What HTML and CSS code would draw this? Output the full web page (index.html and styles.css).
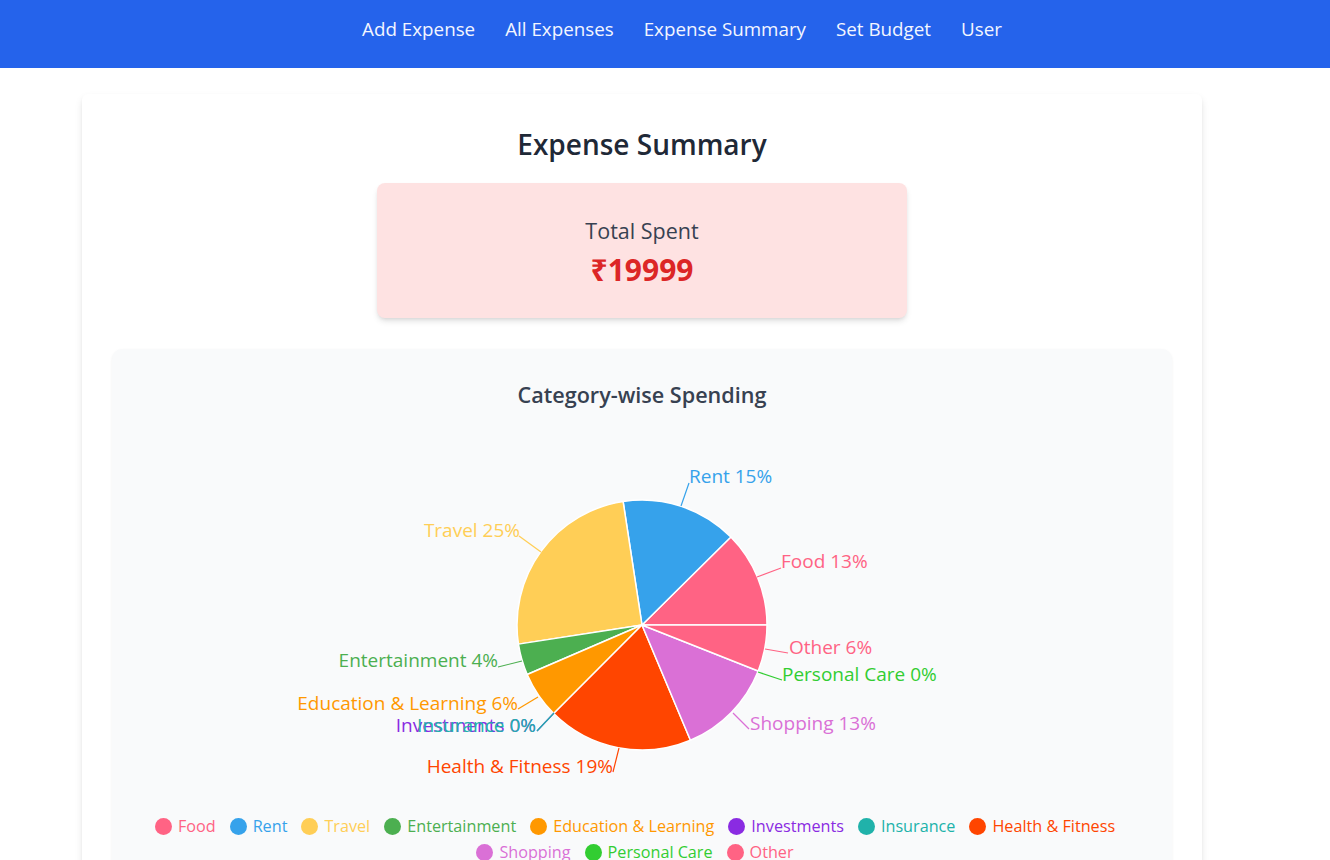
FILE: index.html
```html
<!DOCTYPE html>
<html lang="en">
<head>
<meta charset="utf-8">
<title>Expense Summary</title>
<link rel="stylesheet" href="styles.css">
</head>
<body>
<nav class="nav">
  <a class="nav-link">Add Expense</a>
  <a class="nav-link">All Expenses</a>
  <a class="nav-link">Expense Summary</a>
  <a class="nav-link">Set Budget</a>
  <a class="nav-link">User</a>
</nav>
<main class="panel">
  <h2 class="title">Expense Summary</h2>
  <section class="total-card">
    <div class="total-label">Total Spent</div>
    <div class="total-amount">₹19999</div>
  </section>
  <section class="chart-card">
    <h3 class="chart-title">Category-wise Spending</h3>
    <svg class="pie" viewBox="112 430 1060 370" width="1060" height="370">
      <g stroke="#ffffff" stroke-width="1.5" stroke-linejoin="round">
        <path fill="#FF6384" d="M642 625 L767 625 A125 125 0 0 0 730.85 537.08 Z"/>
        <path fill="#36A2EB" d="M642 625 L730.85 537.08 A125 125 0 0 0 623.09 501.44 Z"/>
        <path fill="#FFCE56" d="M642 625 L623.09 501.44 A125 125 0 0 0 518.47 644.12 Z"/>
        <path fill="#4CAF50" d="M642 625 L518.47 644.12 A125 125 0 0 0 527.2 674.44 Z"/>
        <path fill="#FF9800" d="M642 625 L527.2 674.44 A125 125 0 0 0 553.76 713.54 Z"/>
        <path fill="#FF4500" d="M642 625 L553.76 713.54 A125 125 0 0 0 690.44 740.24 Z"/>
        <path fill="#DA70D6" d="M642 625 L690.44 740.24 A125 125 0 0 0 758.2 671 Z"/>
        <path fill="#FF6384" d="M642 625 L758.2 671 A125 125 0 0 0 767 625 Z"/>
      </g>
      <g fill="none" stroke-width="1.2">
        <polyline stroke="#36A2EB" points="681,506 689,483"/>
        <polyline stroke="#FF6384" points="757,577 781,568"/>
        <polyline stroke="#FF6384" points="765,649 788,653"/>
        <polyline stroke="#32CD32" points="758,672 782,680"/>
        <polyline stroke="#DA70D6" points="733,713 749,729"/>
        <polyline stroke="#FFCE56" points="541,552 519,536"/>
        <polyline stroke="#4CAF50" points="522,661 498,667"/>
        <polyline stroke="#FF9800" points="538,697 518,709"/>
        <polyline stroke="#8A2BE2" points="554,713 537,731"/>
        <polyline stroke="#20B2AA" points="554,713 537,731"/>
        <polyline stroke="#FF4500" points="619,748 613,772"/>
      </g>
      <g class="out-label">
        <text x="689" y="478" fill="#36A2EB">Rent 15%</text>
        <text x="781" y="563" fill="#FF6384">Food 13%</text>
        <text x="789" y="649" fill="#FF6384">Other 6%</text>
        <text x="782" y="676" fill="#32CD32">Personal Care 0%</text>
        <text x="750" y="725" fill="#DA70D6">Shopping 13%</text>
        <text x="520" y="532" fill="#FFCE56" text-anchor="end">Travel 25%</text>
        <text x="498" y="662" fill="#4CAF50" text-anchor="end">Entertainment 4%</text>
        <text x="518" y="705" fill="#FF9800" text-anchor="end">Education &amp; Learning 6%</text>
        <text x="536" y="727" fill="#8A2BE2" text-anchor="end">Investments 0%</text>
        <text x="536" y="727" fill="#20B2AA" text-anchor="end">Insurance 0%</text>
        <text x="613" y="768" fill="#FF4500" text-anchor="end">Health &amp; Fitness 19%</text>
      </g>
    </svg>
    <ul class="legend">
      <li class="legend-item c-food"><span class="dot"></span>Food</li>
      <li class="legend-item c-rent"><span class="dot"></span>Rent</li>
      <li class="legend-item c-travel"><span class="dot"></span>Travel</li>
      <li class="legend-item c-ent"><span class="dot"></span>Entertainment</li>
      <li class="legend-item c-edu"><span class="dot"></span>Education &amp; Learning</li>
      <li class="legend-item c-inv"><span class="dot"></span>Investments</li>
      <li class="legend-item c-ins"><span class="dot"></span>Insurance</li>
      <li class="legend-item c-health"><span class="dot"></span>Health &amp; Fitness</li>
      <li class="legend-item c-shop"><span class="dot"></span>Shopping</li>
      <li class="legend-item c-care"><span class="dot"></span>Personal Care</li>
      <li class="legend-item c-other"><span class="dot"></span>Other</li>
    </ul>
  </section>
</main>
</body>
</html>
```

FILE: styles.css
```css
* { box-sizing: border-box; }
html, body { margin: 0; padding: 0; background: #ffffff; }
body {
  font-family: "Open Sans", "Noto Sans", "Liberation Sans", sans-serif;
  color: #1f2937;
  overflow: hidden;
  height: 860px;
}
.nav {
  height: 68px;
  background: #2563eb;
  display: flex;
  justify-content: center;
  align-items: flex-start;
  gap: 30px;
  padding-top: 17px;
  padding-left: 34px;
}
.nav-link {
  color: #f3f6ff;
  font-size: 18.8px;
  line-height: 24px;
  text-decoration: none;
}
.panel {
  width: 1120px;
  margin: 26px 0 0 82px;
  padding: 30px;
  background: #ffffff;
  border-radius: 6px;
  box-shadow: 0 4px 8px -1px rgba(0,0,0,0.12), 0 2px 4px -2px rgba(0,0,0,0.1);
}
.title {
  margin: 0 0 19px;
  text-align: center;
  font-size: 28px;
  line-height: 40px;
  font-weight: 600;
  color: #1f2937;
}
.total-card {
  width: 50%;
  margin: 0 auto 31px;
  padding: 34px 0 30px;
  background: #fee2e2;
  border-radius: 8px;
  text-align: center;
  box-shadow: 0 4px 6px -1px rgba(0,0,0,0.12), 0 2px 4px -2px rgba(0,0,0,0.1);
}
.total-label {
  font-size: 21.5px;
  line-height: 28px;
  font-weight: 500;
  color: #374151;
  margin-bottom: 7px;
}
.total-amount {
  font-size: 30px;
  line-height: 36px;
  font-weight: 700;
  color: #dc2626;
}
.chart-card {
  background: #f9fafb;
  border-radius: 10px;
  padding: 32px 0 20px;
  box-shadow: 0 1px 3px rgba(0,0,0,0.06);
}
.chart-title {
  margin: 0 0 21px;
  text-align: center;
  font-size: 21.6px;
  line-height: 28px;
  font-weight: 600;
  color: #374151;
}
.pie { display: block; }
.out-label text {
  font-family: "Open Sans", "Noto Sans", sans-serif;
  font-size: 19px;
  dominant-baseline: middle;
}
.legend {
  list-style: none;
  margin: 13px 0 0;
  padding: 0 54px 0 40px;
  display: flex;
  flex-wrap: wrap;
  justify-content: center;
  column-gap: 14px;
  row-gap: 0;
}
.legend-item {
  display: flex;
  align-items: center;
  gap: 6px;
  font-size: 16.2px;
  line-height: 26px;
}
.dot {
  width: 17px;
  height: 17px;
  border-radius: 50%;
  background: currentColor;
}
.c-food { color: #FF6384; }
.c-rent { color: #36A2EB; }
.c-travel { color: #FFCE56; }
.c-ent { color: #4CAF50; }
.c-edu { color: #FF9800; }
.c-inv { color: #8A2BE2; }
.c-ins { color: #20B2AA; }
.c-health { color: #FF4500; }
.c-shop { color: #DA70D6; }
.c-care { color: #32CD32; }
.c-other { color: #FF6384; }
```
